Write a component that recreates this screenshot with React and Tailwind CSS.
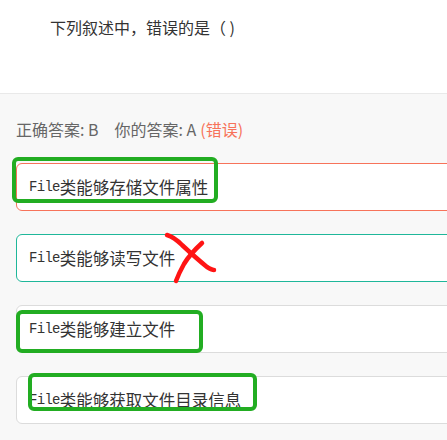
import React from 'react';

const cjk = '"Noto Sans CJK SC", "Liberation Sans", sans-serif';

const options = [
  { text: '类能够存储文件属性', border: 'border-[#f7735a]' },
  { text: '类能够读写文件', border: 'border-[#1fb79a]' },
  { text: '类能够建立文件', border: 'border-[#dcdcdc]' },
  { text: '类能够获取文件目录信息', border: 'border-[#dcdcdc]' },
];

const OptionRow = ({ text, border }) => (
  <div
    className={`w-[470px] h-[48px] bg-white border ${border} rounded-[6px] flex items-center pl-[12px] text-[16.5px] text-[#333]`}
    style={{ fontFamily: cjk }}
  >
    <span className="text-[14px] tracking-[-0.7px]" style={{ fontFamily: '"Liberation Mono", monospace' }}>File</span>
    <span>{text}</span>
  </div>
);

export default function App() {
  return (
    <div className="relative w-[447px] h-[440px] overflow-hidden bg-[#f8f8f8]" style={{ fontFamily: cjk }}>
      {/* question */}
      <div className="h-[94px] bg-white border-b border-[#e9e9e9] pl-[50px] pt-[15px]">
        <p className="text-[16px] leading-[24px] text-[#333]">下列叙述中，错误的是（ )</p>
      </div>

      {/* answer + options */}
      <div className="pl-[16px] pt-[23px]">
        <p className="flex items-center gap-[4px] text-[16px] leading-[24px] text-[#666] mb-[22px]">
          <span className="mr-[12px]">正确答案: B</span>
          <span>你的答案: A</span>
          <span className="text-[#f7735a]">(错误)</span>
        </p>
        <div className="flex flex-col gap-[23px]">
          {options.map((o, i) => (
            <OptionRow key={i} {...o} />
          ))}
        </div>
      </div>

      {/* hand-drawn marks */}
      <div className="absolute left-[12px] top-[157px] w-[206px] h-[46px] border-4 border-[#22ad22] rounded-[6px]" />
      <div className="absolute left-[16px] top-[310px] w-[187px] h-[43px] border-4 border-[#22ad22] rounded-[6px]" />
      <div className="absolute left-[28px] top-[373px] w-[229px] h-[38px] border-4 border-[#22ad22] rounded-[6px]" />
      <svg className="absolute left-[160px] top-[228px]" width="60" height="60" viewBox="0 0 60 60" fill="none">
        <path d="M7 7 Q 14 9 22 17 Q 36 30 47 39 Q 52 42 54 42" stroke="#ff1414" strokeWidth="4.5" strokeLinecap="round" />
        <path d="M42 15 Q 30 26 24 36 Q 19 45 16 53" stroke="#ff1414" strokeWidth="4.5" strokeLinecap="round" />
      </svg>
    </div>
  );
}
